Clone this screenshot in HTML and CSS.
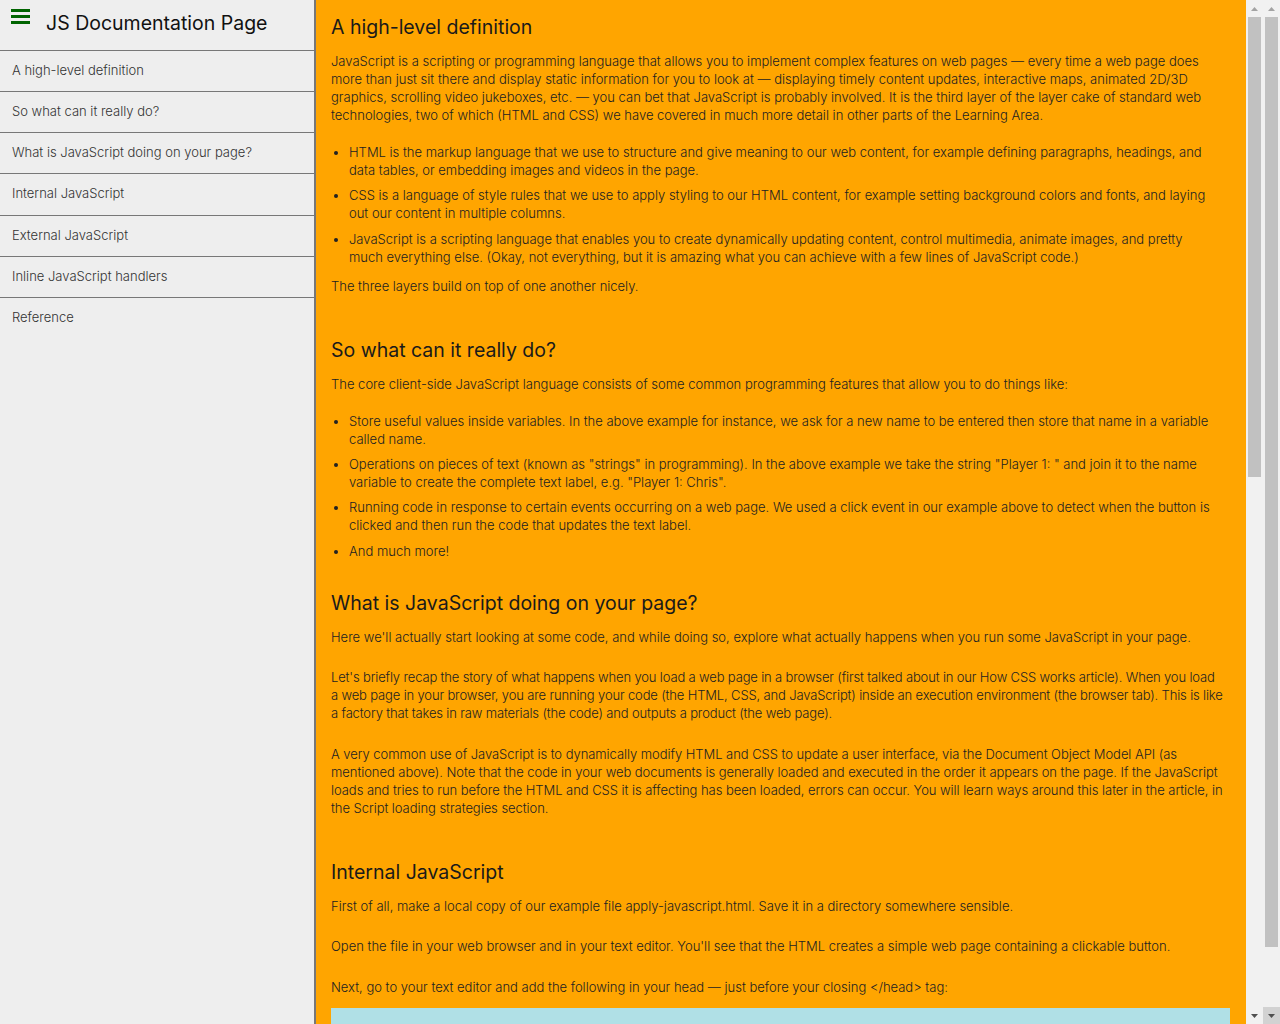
FILE: index.html
```html
<!DOCTYPE html>
<html lang="en">
<head>
<meta charset="utf-8">
<title>JS Documentation Page</title>
<link rel="stylesheet" href="styles.css">
</head>
<body>
<div class="page">
  <nav class="sidebar" id="navbar">
    <header class="sidebar-header">
      <svg class="menu-icon" width="19" height="15" viewBox="0 0 19 15" aria-hidden="true">
        <rect x="0" y="0" width="19" height="3" fill="#006400"/>
        <rect x="0" y="6" width="19" height="3" fill="#006400"/>
        <rect x="0" y="12" width="19" height="3" fill="#006400"/>
      </svg>
      <h1 class="sidebar-title">JS Documentation Page</h1>
    </header>
    <ul class="nav-list">
      <li class="nav-item"><a class="nav-link" href="#A_high-level_definition">A high-level definition</a></li>
      <li class="nav-item"><a class="nav-link" href="#So_what_can_it_really_do">So what can it really do?</a></li>
      <li class="nav-item"><a class="nav-link" href="#What_is_JavaScript_doing_on_your_page">What is JavaScript doing on your page?</a></li>
      <li class="nav-item"><a class="nav-link" href="#Internal_JavaScript">Internal JavaScript</a></li>
      <li class="nav-item"><a class="nav-link" href="#External_JavaScript">External JavaScript</a></li>
      <li class="nav-item"><a class="nav-link" href="#Inline_JavaScript_handlers">Inline JavaScript handlers</a></li>
      <li class="nav-item"><a class="nav-link" href="#Reference">Reference</a></li>
    </ul>
  </nav>

  <main class="main" id="main-doc">
    <div class="main-inner">
      <section class="main-section" id="A_high-level_definition">
        <h2 class="section-title">A high-level definition</h2>
        <p class="text lead">JavaScript is a scripting or programming language that allows you to implement complex features on web pages — every time a web page does more than just sit there and display static information for you to look at — displaying timely content updates, interactive maps, animated 2D/3D graphics, scrolling video jukeboxes, etc. — you can bet that JavaScript is probably involved. It is the third layer of the layer cake of standard web technologies, two of which (HTML and CSS) we have covered in much more detail in other parts of the Learning Area.</p>
        <ul class="list">
          <li class="list-item">HTML is the markup language that we use to structure and give meaning to our web content, for example defining paragraphs, headings, and data tables, or embedding images and videos in the page.</li>
          <li class="list-item">CSS is a language of style rules that we use to apply styling to our HTML content, for example setting background colors and fonts, and laying out our content in multiple columns.</li>
          <li class="list-item">JavaScript is a scripting language that enables you to create dynamically updating content, control multimedia, animate images, and pretty much everything else. (Okay, not everything, but it is amazing what you can achieve with a few lines of JavaScript code.)</li>
        </ul>
        <p class="text">The three layers build on top of one another nicely.</p>
      </section>

      <section class="main-section" id="So_what_can_it_really_do">
        <h2 class="section-title">So what can it really do?</h2>
        <p class="text lead">The core client-side JavaScript language consists of some common programming features that allow you to do things like:</p>
        <ul class="list">
          <li class="list-item">Store useful values inside variables. In the above example for instance, we ask for a new name to be entered then store that name in a variable called name.</li>
          <li class="list-item">Operations on pieces of text (known as "strings" in programming). In the above example we take the string "Player 1: " and join it to the name variable to create the complete text label, e.g. "Player 1: Chris".</li>
          <li class="list-item">Running code in response to certain events occurring on a web page. We used a click event in our example above to detect when the button is clicked and then run the code that updates the text label.</li>
          <li class="list-item">And much more!</li>
        </ul>
      </section>

      <section class="main-section" id="What_is_JavaScript_doing_on_your_page">
        <h2 class="section-title">What is JavaScript doing on your page?</h2>
        <p class="text">Here we'll actually start looking at some code, and while doing so, explore what actually happens when you run some JavaScript in your page.</p>
        <p class="text text-condensed">Let's briefly recap the story of what happens when you load a web page in a browser (first talked about in our How CSS works article). When you load a&nbsp;web page in your browser, you are running your code (the HTML, CSS, and JavaScript) inside an execution environment (the browser tab). This is like a&nbsp;factory that takes in raw materials (the code) and outputs a product (the web page).</p>
        <p class="text text-snug">A very common use of JavaScript is to dynamically modify HTML and CSS to update a user interface, via the Document Object Model API (as mentioned above). Note that the code in your web documents is generally loaded and executed in the order it appears on the page. If the JavaScript loads and tries to run before the HTML and CSS it is affecting has been loaded, errors can occur. You will learn ways around this later in the article, in the Script loading strategies section.</p>
      </section>

      <section class="main-section" id="Internal_JavaScript">
        <h2 class="section-title">Internal JavaScript</h2>
        <p class="text">First of all, make a local copy of our example file apply-javascript.html. Save it in a directory somewhere sensible.</p>
        <p class="text">Open the file in your web browser and in your text editor. You'll see that the HTML creates a simple web page containing a clickable button.</p>
        <p class="text tight">Next, go to your text editor and add the following in your head — just before your closing &lt;/head&gt; tag:</p>
        <pre class="code"><code>&lt;script&gt;

  // JavaScript goes here

&lt;/script&gt;</code></pre>
      </section>
    </div>
  </main>

  <div class="scrollbar" aria-hidden="true">
    <div class="scroll-btn">
      <svg width="7" height="4" viewBox="0 0 7 4"><path d="M3.5 0 L7 4 L0 4 Z" fill="#a3a3a3"/></svg>
    </div>
    <div class="scroll-track">
      <div class="scroll-thumb thumb-main"></div>
    </div>
    <div class="scroll-btn">
      <svg width="7" height="4" viewBox="0 0 7 4"><path d="M0 0 L7 0 L3.5 4 Z" fill="#505050"/></svg>
    </div>
  </div>

  <div class="scrollbar" aria-hidden="true">
    <div class="scroll-btn">
      <svg width="7" height="4" viewBox="0 0 7 4"><path d="M3.5 0 L7 4 L0 4 Z" fill="#a3a3a3"/></svg>
    </div>
    <div class="scroll-track">
      <div class="scroll-thumb thumb-page"></div>
    </div>
    <div class="scroll-btn scroll-btn-active">
      <svg width="7" height="4" viewBox="0 0 7 4"><path d="M0 0 L7 0 L3.5 4 Z" fill="#505050"/></svg>
    </div>
  </div>
</div>
</body>
</html>
```
FILE: styles.css
```css
html, body {
  margin: 0;
  padding: 0;
  overflow: hidden;
}

body {
  font-family: "Inter", "Open Sans", sans-serif;
  font-weight: 300;
  font-size: 13px;
  color: #222;
  background: #eeeeee;
}

.page {
  display: flex;
  height: 100vh;
}

/* Sidebar */
.sidebar {
  flex: 0 0 314px;
  background: #eeeeee;
  border-right: 2px solid #777777;
  display: flex;
  flex-direction: column;
}

.sidebar-header {
  display: flex;
  align-items: flex-start;
  height: 50px;
  padding: 9px 0 0 11px;
  box-sizing: border-box;
}

.menu-icon {
  flex: 0 0 auto;
}

.sidebar-title {
  margin: 2px 0 0 16px;
  font-size: 19.5px;
  line-height: 24px;
  font-weight: 400;
  color: #111;
}

.nav-list {
  list-style: none;
  margin: 0;
  padding: 0;
}

.nav-item {
  border-top: 1px solid #777777;
}

.nav-link {
  display: block;
  height: 40.17px;
  line-height: 38px;
  padding: 0 12px;
  color: #333;
  text-decoration: none;
  font-size: 13px;
  font-weight: 300;
}

/* Main */
.main {
  flex: 1 1 auto;
  min-width: 0;
  overflow-y: auto;
  scrollbar-width: none;
  background: #ffa500;
}

.main-inner {
  width: 899px;
  padding: 15px 0 40px 15px;
}

.main-section {
  padding-bottom: 20.5px;
}

.section-title {
  margin: 0 0 13px;
  font-size: 19.5px;
  line-height: 24px;
  font-weight: 400;
  color: #1a1a1a;
}

.text {
  margin: 0 0 22.5px;
  line-height: 18px;
}

.text.lead {
  margin-bottom: 19px;
}

.text.tight {
  margin-bottom: 12px;
}

.text-condensed {
  letter-spacing: -0.15px;
}

.text-snug {
  letter-spacing: -0.05px;
}

.list {
  margin: 0 0 10.75px;
  padding: 0 18px 0 18px;
}

.list-item {
  line-height: 18px;
}

.list-item + .list-item {
  margin-top: 7.4px;
}

.code {
  margin: 0 0 22.5px;
  padding: 24px 16px;
  background: #b0e0e6;
  font-family: "Liberation Mono", monospace;
  font-size: 13px;
  line-height: 18px;
  color: #222;
}

/* Scrollbars */
.scrollbar {
  flex: 0 0 17px;
  display: flex;
  flex-direction: column;
  background: #f1f1f1;
}

.scroll-btn {
  flex: 0 0 17px;
  display: flex;
  align-items: center;
  justify-content: center;
}

.scroll-btn svg {
  display: block;
}

.scroll-btn-active {
  background: #d2d2d2;
}

.scroll-track {
  flex: 1 1 auto;
  padding: 0 2px;
}

.scroll-thumb {
  background: #c1c1c1;
}

.thumb-main {
  height: 460px;
}

.thumb-page {
  height: 930px;
}
```
